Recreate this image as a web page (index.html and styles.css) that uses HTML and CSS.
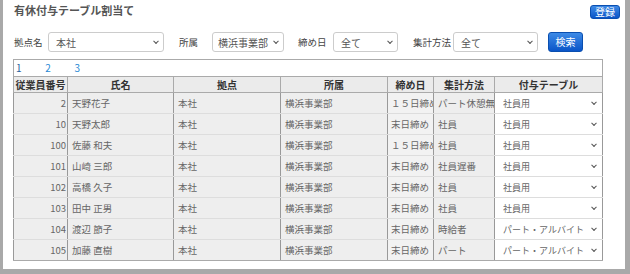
FILE: index.html
```html
<!DOCTYPE html>
<html lang="ja">
<head>
    <meta charset="UTF-8">
    <meta name="viewport" content="width=device-width, initial-scale=1.0">
    <title>有休付与テーブル割当て</title>
    <link rel="stylesheet" href="styles.css">
</head>
<body>
    <div class="page">
        <div class="topbar">
            <h1 class="title">有休付与テーブル割当て</h1>
            <button class="btn btn-entry">登録</button>
        </div>
        <div class="filters">
            <label class="lbl lbl-base">拠点名</label>
            <span class="dd"><select class="sel sel-base"><option>本社</option></select></span>
            <label class="lbl lbl-dept">所属</label>
            <span class="dd"><select class="sel sel-dept"><option>横浜事業部</option></select></span>
            <label class="lbl lbl-close">締め日</label>
            <span class="dd"><select class="sel sel-close"><option>全て</option></select></span>
            <label class="lbl lbl-method">集計方法</label>
            <span class="dd"><select class="sel sel-method"><option>全て</option></select></span>
            <button class="btn btn-search">検索</button>
        </div>
        <div class="grid">
            <div class="pager">
                <a href="#" class="current">1</a>
                <a href="#">2</a>
                <a href="#">3</a>
            </div>
            <table class="list">
                <colgroup>
                    <col class="c-no">
                    <col class="c-name">
                    <col class="c-base">
                    <col class="c-dept">
                    <col class="c-close">
                    <col class="c-method">
                    <col class="c-table">
                </colgroup>
                <thead>
                    <tr>
                        <th>従業員番号</th>
                        <th>氏名</th>
                        <th>拠点</th>
                        <th>所属</th>
                        <th>締め日</th>
                        <th>集計方法</th>
                        <th>付与テーブル</th>
                    </tr>
                </thead>
                <tbody id="rows"></tbody>
            </table>
        </div>
    </div>

    <script>
        const employees = [
            [2, "天野花子", "１５日締め", "パート休憩無", "社員用"],
            [10, "天野太郎", "末日締め", "社員", "社員用"],
            [100, "佐藤 和夫", "１５日締め", "社員", "社員用"],
            [101, "山崎 三郎", "末日締め", "社員遅番", "社員用"],
            [102, "高橋 久子", "末日締め", "社員", "社員用"],
            [103, "田中 正男", "末日締め", "社員", "社員用"],
            [104, "渡辺 節子", "末日締め", "時給者", "パート・アルバイト"],
            [105, "加藤 直樹", "末日締め", "パート", "パート・アルバイト"]
        ];

        let html = '';
        employees.forEach(e => {
            html += `<tr>
                <td class="num">${e[0]}</td>
                <td>${e[1]}</td>
                <td>本社</td>
                <td>横浜事業部</td>
                <td class="close">${e[2]}</td>
                <td class="method">${e[3]}</td>
                <td class="pick"><span class="dd dd-cell"><select class="sel sel-cell">
                    <option${e[4] === '社員用' ? ' selected' : ''}>社員用</option>
                    <option${e[4] === 'パート・アルバイト' ? ' selected' : ''}>パート・アルバイト</option>
                </select></span></td>
            </tr>`;
        });
        document.getElementById('rows').innerHTML = html;
    </script>
</body>
</html>
```

FILE: styles.css
```css
body {
    margin: 0;
    background-color: #a9a9a9;
    font-family: "Noto Sans CJK JP", "Liberation Sans", sans-serif;
    color: #333;
}
.page {
    background-color: white;
    margin: 0 5px 0 3px;
    height: 269px;
    overflow: hidden;
}
.topbar {
    display: flex;
    justify-content: space-between;
    align-items: flex-start;
    padding: 5px 5px 0 11px;
    height: 14px;
}
.title {
    margin: 0;
    font-size: 11px;
    line-height: 11px;
    font-weight: bold;
    color: #555;
}
.btn {
    font-family: inherit;
    color: white;
    border: 1px solid #0a4fb0;
    border-radius: 3px;
    background: linear-gradient(#3d8ae6, #0a55c8);
    padding: 0;
    font-size: 10px;
    cursor: pointer;
}
.btn-entry {
    width: 30px;
    height: 14px;
    line-height: 12px;
}
.btn-search {
    width: 35px;
    height: 20px;
    line-height: 18px;
    margin-left: 10px;
}
.filters {
    display: flex;
    align-items: center;
    margin-top: 13px;
    padding-left: 11px;
    height: 20px;
}
.lbl {
    font-size: 9.5px;
    line-height: 12px;
    color: #444;
}
.lbl-base { width: 34px; }
.lbl-dept { width: 33px; margin-left: 15px; }
.lbl-close { width: 35px; margin-left: 14px; }
.lbl-method { width: 40px; margin-left: 15px; }
.dd {
    position: relative;
    display: inline-block;
}
.dd::after {
    content: '';
    position: absolute;
    right: 6px;
    top: 50%;
    width: 3px;
    height: 3px;
    border-right: 1.5px solid #555;
    border-bottom: 1.5px solid #555;
    transform: translateY(-70%) rotate(45deg);
    pointer-events: none;
}
.sel {
    display: block;
    appearance: none;
    -webkit-appearance: none;
    font-family: inherit;
    font-size: 10px;
    color: #555;
    height: 20px;
    border: 1px solid #ccc;
    border-radius: 3px;
    background-color: white;
    padding: 0 12px 0 7px;
}
.sel-base { width: 116px; }
.sel-dept { width: 72px; padding-left: 5px; }
.sel-close { width: 65px; }
.sel-method { width: 85px; }
.grid {
    margin: 7px 0 0 10px;
    width: 588px;
    border: 1px solid #aaa;
    border-bottom: none;
}
.pager {
    height: 16px;
    font-size: 10px;
    line-height: 16px;
    padding-left: 2px;
}
.pager a {
    color: #2a8ad4;
    text-decoration: none;
    display: inline-block;
    width: 27px;
}
.pager a.current {
    color: #2a5f9e;
}
.list {
    width: 589px;
    margin-left: -1px;
    border-collapse: collapse;
    table-layout: fixed;
    font-size: 9.5px;
}
.c-no { width: 54px; }
.c-name { width: 106px; }
.c-base { width: 107px; }
.c-dept { width: 107px; }
.c-close { width: 46px; }
.c-method { width: 61px; }
.c-table { width: 108px; }
.list th {
    height: 15px;
    padding: 0;
    line-height: 14px;
    font-size: 10px;
    background-color: #ebebeb;
    border: 1px solid #aaa;
    color: #333;
    font-weight: bold;
    white-space: nowrap;
    overflow: hidden;
}
.list td {
    height: 20px;
    padding: 0 0 0 4px;
    line-height: 20px;
    background-color: #eee;
    color: #666;
    border: 1px solid #999;
    border-top-color: #ddd;
    border-bottom-color: #ddd;
    white-space: nowrap;
    overflow: hidden;
}
.list tr:last-child td {
    border-bottom-color: #aaa;
}
.list td.num {
    text-align: right;
    padding: 0 1px 0 0;
}
.list td.close {
    border-left-color: #ccc;
    padding-left: 3px;
    background-color: #f2f2f2;
}
.list td.method {
    border-left-color: #777;
}
.list td.pick {
    padding: 0;
    background-color: white;
    border-left-color: #ccc;
}
.dd-cell {
    display: block;
}
.sel-cell {
    width: 100%;
    height: 20px;
    border: none;
    border-radius: 0;
    font-size: 9px;
    padding: 0 10px 0 8px;
    color: #666;
}
```
